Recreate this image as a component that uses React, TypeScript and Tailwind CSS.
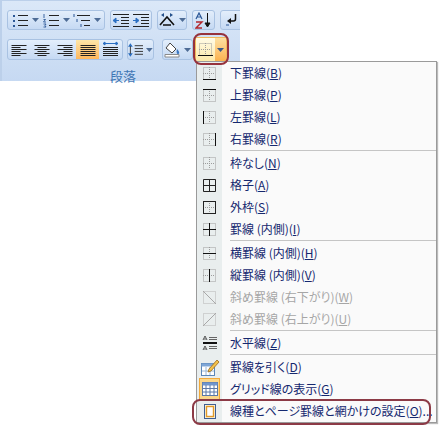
import React from "react";

const font = { fontFamily: '"Noto Sans CJK JP", "Liberation Sans", sans-serif' };

function Dots({ x = 3, y = 3, s = 12 }: { x?: number; y?: number; s?: number }) {
  return (
    <g stroke="#9c9c9c" strokeWidth="1" strokeDasharray="1 1" fill="none">
      <rect x={x + 0.5} y={y + 0.5} width={s} height={s} />
      <path d={`M${x + s / 2 + 0.5} ${y}v${s}M${x} ${y + s / 2 + 0.5}h${s}`} />
    </g>
  );
}

function Bi({ kind, faded }: { kind: string; faded?: boolean }) {
  const c = faded ? "#a8a8a8" : "#111";
  const lines: Record<string, string> = {
    bottom: "M3 15.5h13",
    top: "M3 3.5h13",
    left: "M3.5 3v13",
    right: "M15.5 3v13",
    none: "",
    inner: "M9.5 3v13M3 9.5h13",
    h: "M3 9.5h13",
    v: "M9.5 3v13",
    d1: "M3 3l13 13",
    d2: "M3 16l13-13",
  };
  return (
    <svg width="19" height="19" viewBox="0 0 19 19">
      {!faded && <Dots />}
      {faded && (
        <g stroke="#b4b4b4" strokeDasharray="1 1" fill="none">
          <rect x="3.500" y="3.500" width="12" height="12" />
        </g>
      )}
      {kind === "all" && <path d="M3.5 3.5h12v12h-12zM9.5 3.5v12M3.5 9.5h12" stroke="#222" strokeWidth="1" fill="none" />}
      {kind === "outer" && <rect x="3.500" y="3.500" width="12" height="12" stroke="#222" strokeWidth="1" fill="none" />}
      {lines[kind] && <path d={lines[kind]} stroke={c} strokeWidth="1" fill="none" />}
    </svg>
  );
}

function Special({ kind }: { kind: string }) {
  if (kind === "hr")
    return (
      <svg width="18" height="18" viewBox="0 0 18 18">
        <path d="M2 6l2-4 2 4M2.800 5h2.400M2 16l2-4 2 4M2.800 15h2.400" stroke="#333" fill="none" strokeWidth=".8" />
        <path d="M8 3.500h8M8 5.500h8M8 12.500h8M8 14.500h8" stroke="#666" />
        <path d="M2 9h14" stroke="#111" strokeWidth="2" />
      </svg>
    );
  if (kind === "draw")
    return (
      <svg width="20" height="20" viewBox="0 0 20 20">
        <rect x="1.500" y="6.500" width="13" height="12" fill="#fff" stroke="#5b86b8" />
        <path d="M1.500 6.500h13v3h-13z" fill="#7ea6d6" />
        <path d="M6 10v8M10 10v8M2 14h12" stroke="#9ab6d6" />
        <path d="M9 12l8-9 2 2-8 9-3 1z" fill="#f3c24a" stroke="#9a6a1c" strokeWidth=".8" />
      </svg>
    );
  if (kind === "grid")
    return (
      <svg width="16" height="14" viewBox="0 0 16 14">
        <rect x=".5" y=".5" width="15" height="13" fill="#fff" stroke="#5b78a8" />
        <path d="M.5 .5h15v3h-15z" fill="#6f95cc" />
        <path d="M4 3v11M8 3v11M12 3v11M1 6.500h14M1 10h14" stroke="#5b78a8" />
      </svg>
    );
  return (
    <svg width="14" height="17" viewBox="0 0 14 17">
      <rect x="1.500" y="1.500" width="11" height="14" fill="#fff6dc" stroke="#3f5f92" />
      <rect x="3.500" y="3.500" width="7" height="10" fill="#fff" stroke="#e09a2a" strokeWidth="1.400" />
    </svg>
  );
}

type Item = { t: string; k: string; u: string; end?: string; dis?: boolean; sp?: boolean; sep?: boolean };
const items: Item[] = [
  { t: "下罫線(", u: "B", k: "bottom" },
  { t: "上罫線(", u: "P", k: "top" },
  { t: "左罫線(", u: "L", k: "left" },
  { t: "右罫線(", u: "R", k: "right", sep: true },
  { t: "枠なし(", u: "N", k: "none" },
  { t: "格子(", u: "A", k: "all" },
  { t: "外枠(", u: "S", k: "outer" },
  { t: "罫線 (内側)(", u: "I", k: "inner", sep: true },
  { t: "横罫線 (内側)(", u: "H", k: "h" },
  { t: "縦罫線 (内側)(", u: "V", k: "v" },
  { t: "斜め罫線 (右下がり)(", u: "W", k: "d1", dis: true },
  { t: "斜め罫線 (右上がり)(", u: "U", k: "d2", dis: true, sep: true },
  { t: "水平線(", u: "Z", k: "hr", sp: true, sep: true },
  { t: "罫線を引く(", u: "D", k: "draw", sp: true },
  { t: "グリッド線の表示(", u: "G", k: "grid", sp: true },
  { t: "線種とページ罫線と網かけの設定(", u: "O", k: "page", sp: true, end: ")..." },
];

function Menu() {
  return (
    <div className="absolute left-[196px] top-[61px] w-[241px] border border-[#9a9a9a] bg-[#fafafa] shadow-[1px_1px_1px_#bbb]">
      {items.map((it) => (
        <React.Fragment key={it.t}>
          <div className="flex h-[22px] items-center">
            <div className="relative flex h-full w-[25px] shrink-0 items-center justify-center bg-[#e9eeee]">
              {it.k === "grid" && <div className="absolute inset-y-0 left-[2px] right-[2px] border border-[#f2a93b] bg-[#fbd78a]" />}
              <div className="relative flex">{it.sp ? <Special kind={it.k} /> : <Bi kind={it.k} faded={it.dis} />}</div>
            </div>
            <div className={`ml-[8px] whitespace-pre text-[12px] leading-none [font-feature-settings:'palt'] ${it.dis ? "text-[#a6a6a6]" : "text-[#15286f]"}`}>
              {it.t}
              <span className="underline">{it.u}</span>
              {it.end ?? ")"}
            </div>
          </div>
          {it.sep && (
            <div className="flex h-[2px]">
              <div className="w-[25px] bg-[#e9eeee]" />
              <div className="ml-[8px] h-px flex-1 bg-[#c5c5c5]" />
            </div>
          )}
        </React.Fragment>
      ))}
    </div>
  );
}

const grp = "flex items-center rounded-[3px] border border-[#a9c2e2] bg-gradient-to-b from-[#e3eefb] to-[#c5d9f3]";

function Lines({ align = "l" }: { align?: string }) {
  const ys = [2, 4, 6, 8, 10, 12];
  return (
    <svg width="16" height="14" viewBox="0 0 16 14">
      {ys.map((y, i) => {
        const short = align !== "j" && i % 2 === 1;
        const len = short ? 9 : 15;
        const x = align === "r" ? 15.5 - len : align === "c" ? (16 - len) / 2 : 0.5;
        return <path key={y} d={`M${x} ${y + 0.5}h${len}`} stroke="#222" />;
      })}
    </svg>
  );
}

function Arrow() {
  return <svg width="7" height="4" viewBox="0 0 7 4" className="ml-[3px]"><path d="M0 0h7L3.500 4z" fill="#4e6c96" /></svg>;
}

function ListIcon({ kind }: { kind: number }) {
  return (
    <svg width="18" height="15" viewBox="0 0 18 15">
      {kind === 0 && <path d="M2 2h2v2H2zM2 7h2v2H2zM2 12h2v2H2z" fill="#2b5797" />}
      {kind === 1 && <path d="M2 1v4M1.500 6.500h2l-2 2.500h2.500M1.500 11h2.500l-1 1.500 1 1.500H1.500" stroke="#2b5797" fill="none" strokeWidth=".9" />}
      {kind === 2 && <path d="M1 1v3M4 6v3M8 11v3" stroke="#2b5797" fill="none" />}
      <path d={kind === 2 ? "M4 2.500h13M8 7.500h9M11 12.500h6" : "M7 2.500h10M7 7.500h10M7 12.500h10"} stroke="#222" />
    </svg>
  );
}

function Indent({ flip }: { flip?: boolean }) {
  return (
    <svg width="18" height="15" viewBox="0 0 18 15">
      <path d="M1 1.500h16M9 4.500h8M9 7.500h8M9 10.500h8M1 13.500h16" stroke="#222" />
      <path d={flip ? "M1 7.500h4M4 5l3 2.500L4 10z" : "M3 7.500h4M4 5L1 7.500 4 10z"} stroke="#2b6fc2" fill="#2b6fc2" />
    </svg>
  );
}

function Ribbon() {
  return (
    <div className="h-[81px] w-[240px] border-l-2 border-t border-[#bcd0ea] bg-gradient-to-b from-[#dbe8f8] to-[#c6d9f2] pl-[5px] pt-[9px]">
      <div className="flex h-[20px] gap-[5px] overflow-hidden">
        <div className={`${grp} w-[98px] shrink-0 justify-around px-[2px]`}>
          {[0, 1, 2].map((k) => (
            <div key={k} className="flex items-center">
              <ListIcon kind={k} />
              <Arrow />
            </div>
          ))}
        </div>
        <div className={`${grp} w-[42px] shrink-0 justify-around`}>
          <Indent />
          <Indent flip />
        </div>
        <div className={`${grp} w-[30px] shrink-0 justify-center`}>
          <svg width="18" height="16" viewBox="0 0 18 16">
            <path d="M2 13L9 5l7 8M5 13h8" stroke="#111" strokeWidth="1.600" fill="none" />
            <path d="M3 3l3-2v4zM15 3l-3-2v4z" fill="#234f8a" />
          </svg>
          <Arrow />
        </div>
        <div className={`${grp} w-[23px] shrink-0 justify-center`}>
          <svg width="18" height="17" viewBox="0 0 18 17">
            <path d="M1 7l3-6 3 6M2 5h4" stroke="#2b5797" fill="none" strokeWidth="1.200" />
            <path d="M1 10h6l-6 6h6" stroke="#b3262c" fill="none" strokeWidth="1.400" />
            <path d="M12.500 1v13M10 11l2.500 4 2.500-4z" stroke="#111" fill="#111" />
          </svg>
        </div>
        <div className={`${grp} w-[30px] shrink-0 justify-start pl-[3px]`}>
          <svg width="16" height="14" viewBox="0 0 16 14">
            <path d="M11.500 1v5a2 2 0 0 1-2 2H5" stroke="#111" strokeWidth="1.500" fill="none" />
            <path d="M7 5L3 8l4 3z" fill="#111" />
            <path d="M2 12h3" stroke="#2b5797" />
          </svg>
        </div>
      </div>
      <div className="mt-[9px] flex h-[21px] items-stretch">
        <div className={`${grp} w-[116px] overflow-hidden`}>
          <div className="flex flex-1 justify-center"><Lines /></div>
          <div className="flex flex-1 justify-center"><Lines align="c" /></div>
          <div className="flex flex-1 justify-center"><Lines align="r" /></div>
          <div className="flex h-full flex-1 items-center justify-center bg-gradient-to-b from-[#fde6a8] to-[#fdb75c]"><Lines align="j" /></div>
          <div className="flex flex-1 justify-center">
            <svg width="17" height="17" viewBox="0 0 17 17">
              <path d="M1 2.500h15M3 1l-2 1.500L3 4zM14 1l2 1.500L14 4z" stroke="#2b6fc2" fill="#2b6fc2" />
              <path d="M1 6.500h15M1 8.500h15M1 10.500h15M1 12.500h15M1 14.500h15" stroke="#222" />
            </svg>
          </div>
        </div>
        <div className={`${grp} ml-[4px] w-[27px] justify-center`}>
          <svg width="16" height="16" viewBox="0 0 16 16">
            <path d="M2.500 1L0 4.500h5zM2.500 15L0 11.500h5z" fill="#2b6fc2" />
            <path d="M2.500 4v8M7 3.500h9M7 6.500h9M7 9.500h9M7 12.500h9" stroke="#333" />
          </svg>
          <Arrow />
        </div>
        <div className={`${grp} ml-[8px] w-[31px] justify-center`}>
          <svg width="17" height="17" viewBox="0 0 17 17">
            <path d="M6 2l6 6-4 4-6-5z" fill="#fff" stroke="#444" />
            <path d="M13 8c2 2 3 4 1.500 5S12 11 13 8z" fill="#3b78c2" />
            <path d="M1 13.500h14v2.500H1z" fill="#fff" stroke="#8a8a8a" />
          </svg>
          <Arrow />
        </div>
        <div className="ml-[2px] -mt-[2px] flex h-[25px] w-[32px] overflow-hidden rounded-[2px] border border-[#f0b95c]">
          <div className="flex flex-1 items-center justify-center bg-gradient-to-b from-[#fffbe6] to-[#fde9a8]">
            <svg width="19" height="19" viewBox="0 0 19 19">
              <Dots />
              <path d="M2 15.500h15" stroke="#111" strokeWidth="1" />
            </svg>
          </div>
          <div className="flex w-[11px] items-center justify-center bg-gradient-to-b from-[#fde0a0] to-[#fbb24e]">
            <svg width="7" height="4" viewBox="0 0 7 4"><path d="M0 0h7L3.500 4z" fill="#3c5a88" /></svg>
          </div>
        </div>
      </div>
      <div className="mt-[9px] w-[232px] text-center text-[13px] leading-[13px] text-[#3f76b4]">段落</div>
    </div>
  );
}

export default function App() {
  return (
    <div className="relative h-[428px] w-[442px] overflow-hidden bg-white" style={font}>
      <Ribbon />
      <Menu />
      <div className="absolute left-[193px] top-[33px] h-[32px] w-[36px] rounded-[8px] border-[2px] border-[#96323c]" />
      <div className="absolute left-[192px] top-[399px] h-[26px] w-[239px] rounded-[8px] border-[2px] border-[#8c3a46]" />
    </div>
  );
}
